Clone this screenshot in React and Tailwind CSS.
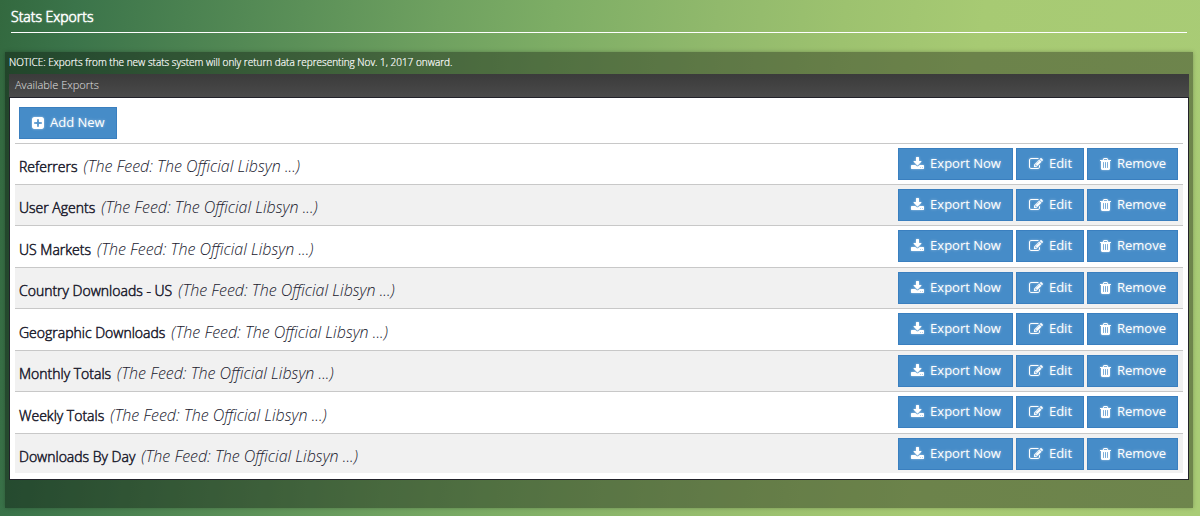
// Each glyph keeps its own advance width on a 1792-unit tall box.
const ICONS = {
  plus: {
    box: '128 0 1536 1792',
    size: 'h-3.5 w-3',
    d: 'M1408 960v-128q0-26-19-45t-45-19h-320v-320q0-26-19-45t-45-19h-128q-26 0-45 19t-19 45v320h-320q-26 0-45 19t-19 45v128q0 26 19 45t45 19h320v320q0 26 19 45t45 19h128q26 0 45-19t19-45v-320h320q26 0 45-19t19-45zm256-544v960q0 119-84.5 203.5t-203.5 84.5h-960q-119 0-203.5-84.5t-84.5-203.5v-960q0-119 84.5-203.5t203.5-84.5h960q119 0 203.5 84.5t84.5 203.5z',
  },
  download: {
    box: '64 0 1664 1792',
    size: 'h-3.5 w-[13px]',
    d: 'M1344 1344q0-26-19-45t-45-19-45 19-19 45 19 45 45 19 45-19 19-45zm256 0q0-26-19-45t-45-19-45 19-19 45 19 45 45 19 45-19 19-45zm128-224v320q0 40-28 68t-68 28h-1472q-40 0-68-28t-28-68v-320q0-40 28-68t68-28h465l135 136q58 56 136 56t136-56l136-136h464q40 0 68 28t28 68zm-325-569q17 41-14 70l-448 448q-18 19-45 19t-45-19l-448-448q-31-29-14-70 17-39 59-39h256v-448q0-26 19-45t45-19h256q26 0 45 19t19 45v448h256q42 0 59 39z',
  },
  edit: {
    box: '0 0 1792 1792',
    size: 'size-3.5',
    d: 'M888 1184l116-116-152-152-116 116v56h96v96h56zm440-720q-16-16-33 1l-350 350q-17 17-1 33t33-1l350-350q17-17 1-33zm80 594v190q0 119-84.5 203.5t-203.5 84.5h-832q-119 0-203.5-84.5t-84.5-203.5v-832q0-119 84.5-203.5t203.5-84.5h832q63 0 117 25 15 7 18 23 3 17-9 29l-49 49q-14 14-32 8-23-6-45-6h-832q-66 0-113 47t-47 113v832q0 66 47 113t113 47h832q66 0 113-47t47-113v-126q0-13 9-22l64-64q15-15 35-7t20 29zm-96-738l288 288-672 672h-288v-288zm444 132l-92 92-288-288 92-92q28-28 68-28t68 28l152 152q28 28 28 68t-28 68z',
  },
  trash: {
    box: '192 0 1408 1792',
    size: 'h-3.5 w-[11px]',
    d: 'M704 1376v-704q0-14-9-23t-23-9h-64q-14 0-23 9t-9 23v704q0 14 9 23t23 9h64q14 0 23-9t9-23zm256 0v-704q0-14-9-23t-23-9h-64q-14 0-23 9t-9 23v704q0 14 9 23t23 9h64q14 0 23-9t9-23zm256 0v-704q0-14-9-23t-23-9h-64q-14 0-23 9t-9 23v704q0 14 9 23t23 9h64q14 0 23-9t9-23zm-544-992h448l-48-117q-7-9-17-11h-317q-10 2-17 11zm928 32v64q0 14-9 23t-23 9h-96v948q0 83-47 143.5t-113 60.5h-832q-66 0-113-58.5t-47-141.5v-952h-96q-14 0-23-9t-9-23v-64q0-14 9-23t23-9h309l70-167q15-37 54-63t79-26h320q40 0 79 26t54 63l70 167h309q14 0 23 9t9 23z',
  },
};

const EXPORTS = [
  'Referrers',
  'User Agents',
  'US Markets',
  'Country Downloads - US',
  'Geographic Downloads',
  'Monthly Totals',
  'Weekly Totals',
  'Downloads By Day',
];

const SHOW = '(The Feed: The Official Libsyn ...)';

function ActionButton({ icon, children }) {
  const { box, size, d } = ICONS[icon];
  return (
    <button
      type="button"
      className="inline-flex h-8 items-center gap-1.5 border border-[#3a7fbf] bg-[#468cc8] px-[11px] pl-3 text-[13px] text-white whitespace-nowrap cursor-pointer hover:bg-[#3a7fbf] [text-shadow:0_0_3px_rgba(255,255,255,0.5)]"
    >
      <svg viewBox={box} className={`${size} shrink-0 fill-current drop-shadow-[0_0_1px_rgba(255,255,255,0.5)]`} aria-hidden="true">
        <path d={d} />
      </svg>
      {children}
    </button>
  );
}

function ExportRow({ name }) {
  return (
    <tr className="h-[41px] not-first:odd:h-[42px] last:h-10 even:bg-[#f1f1f1]">
      <th scope="row" className="border-t border-[#c8c8c8] pl-1 pt-1 text-left align-middle font-light text-[#20202e]">
        <span className="text-sm [-webkit-text-stroke:0.5px_currentColor]">{name}</span>
        <em className="ml-1.5 text-base">{SHOW}</em>
      </th>
      <td className="border-t border-[#c8c8c8] pr-[5px] pt-1 align-top">
        <div className="flex justify-end gap-[3px]">
          <ActionButton icon="download">Export Now</ActionButton>
          <ActionButton icon="edit">Edit</ActionButton>
          <ActionButton icon="trash">Remove</ActionButton>
        </div>
      </td>
    </tr>
  );
}

export default function App() {
  return (
    <div className="min-h-screen bg-[linear-gradient(97deg,#33693f_0%,#3b744a_6%,#5b9058_24%,#6fa160_35%,#7dad65_44%,#91b96c_57%,#9dc26f_67%,#a7ca73_78%,#a9cc76_100%)] pb-2 font-['Open_Sans',sans-serif]">
      <header className="ml-[11px] mr-[13px] h-[33px] border-b border-white pt-[7px]">
        <h1 className="text-sm font-light text-white [-webkit-text-stroke:0.5px_currentColor] [text-shadow:0_0_2px_rgba(255,255,255,0.6)]">Stats Exports</h1>
      </header>

      <main className="mt-[19px] ml-[5px] mr-[7px] bg-black/35 pb-7 shadow-[0_0_4px_rgba(0,0,0,0.25)]">
        <p className="pl-1 pt-0.5 h-[22px] text-[10px] leading-4 font-light text-white [-webkit-text-stroke:0.2px_currentColor]">
          NOTICE: Exports from the new stats system will only return data representing Nov. 1, 2017 onward.
        </p>

        <section className="mx-1 border border-t-0 border-[#22222a]">
          <h2 className="-mx-px h-6 border-b border-[#22222a] bg-linear-to-b from-[#3b3b3b] to-[#4a4a4a] pl-1.5 text-[11px] leading-[22px] font-light text-[#e4e4e4]">
            Available Exports
          </h2>
          <div className="bg-white px-[5px] pb-1.5">
            <div className="flex h-[45px] items-center pl-1 pt-1">
              <ActionButton icon="plus">Add New</ActionButton>
            </div>
            <table className="w-full border-separate border-spacing-0">
              <tbody>
                {EXPORTS.map(name => (
                  <ExportRow key={name} name={name} />
                ))}
              </tbody>
            </table>
          </div>
        </section>
      </main>
    </div>
  );
}
